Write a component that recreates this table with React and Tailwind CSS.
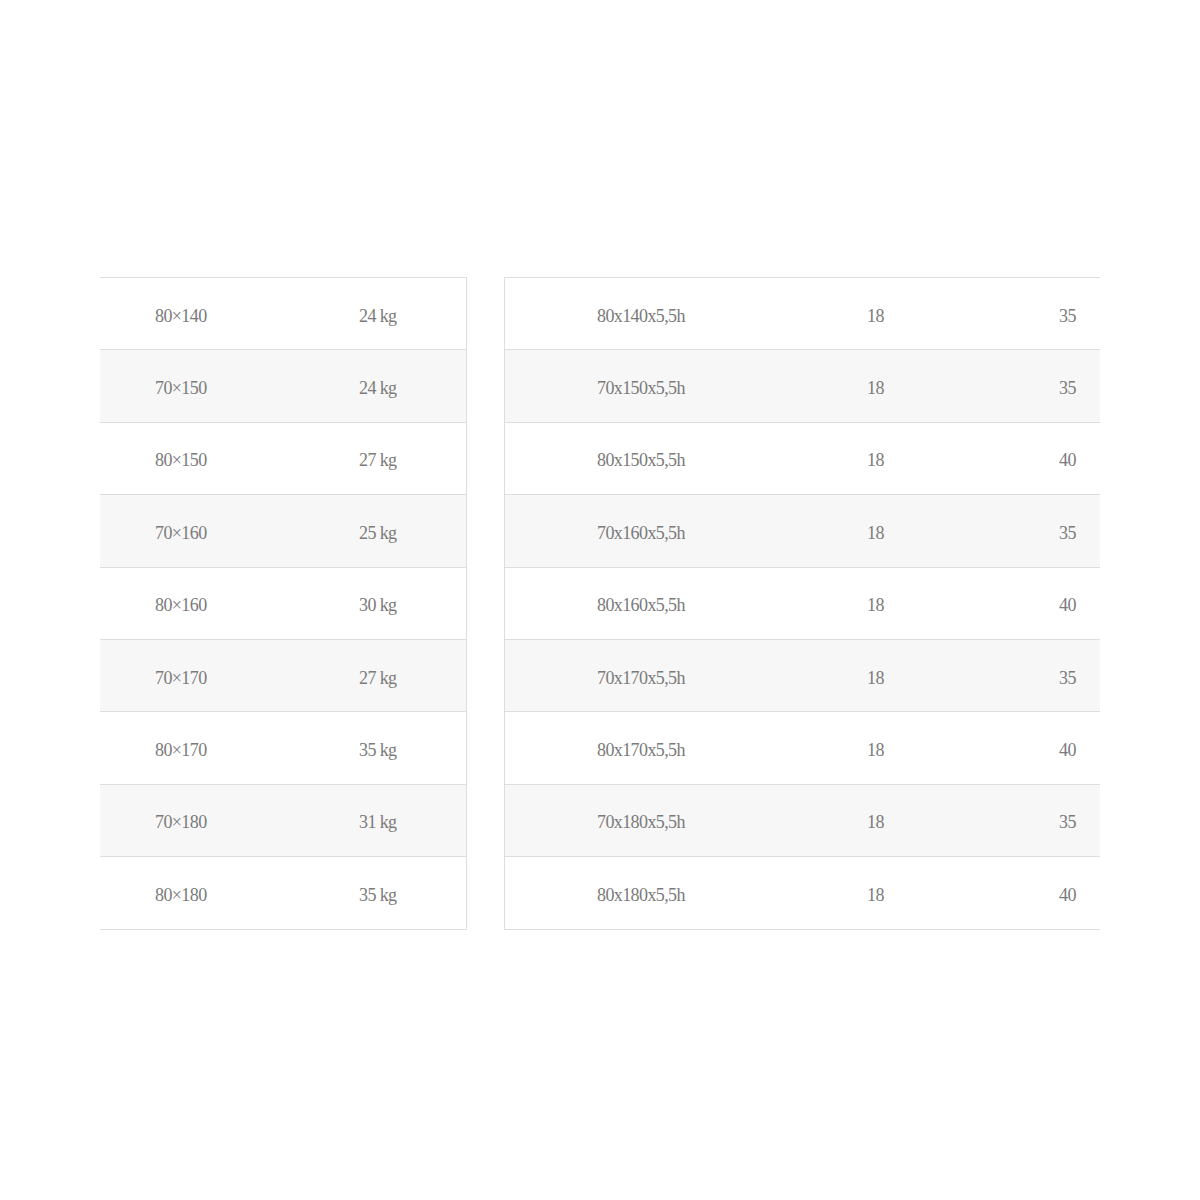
import React from 'react';

const leftRows = [
    ['80×140', '24 kg'],
    ['70×150', '24 kg'],
    ['80×150', '27 kg'],
    ['70×160', '25 kg'],
    ['80×160', '30 kg'],
    ['70×170', '27 kg'],
    ['80×170', '35 kg'],
    ['70×180', '31 kg'],
    ['80×180', '35 kg'],
];

const rightRows = [
    ['80x140x5,5h', '18', '35'],
    ['70x150x5,5h', '18', '35'],
    ['80x150x5,5h', '18', '40'],
    ['70x160x5,5h', '18', '35'],
    ['80x160x5,5h', '18', '40'],
    ['70x170x5,5h', '18', '35'],
    ['80x170x5,5h', '18', '40'],
    ['70x180x5,5h', '18', '35'],
    ['80x180x5,5h', '18', '40'],
];

const App = () => {
    return (
        <div
            className="w-[1200px] h-[1200px] bg-white text-[#7b7b7b] text-[18px] tracking-[-0.6px]"
            style={{fontFamily: '"Liberation Serif", serif'}}
        >
            <div className="flex gap-[37px] pt-[277px] pl-[100px]">
                {/* left table */}
                <div className="w-[367px] border-t border-r border-[#dedede]">
                    {leftRows.map((row, i) => (
                        <div
                            key={i}
                            className={`flex items-center h-[72.4px] pt-[5px] border-b border-[#dedede] ${i % 2 === 1 ? 'bg-[#f7f7f7]' : 'bg-white'}`}
                        >
                            <span className="w-[259px] pl-[55px]">{row[0]}</span>
                            <span>{row[1]}</span>
                        </div>
                    ))}
                </div>

                {/* right table */}
                <div className="w-[596px] border-t border-l border-[#dedede]">
                    {rightRows.map((row, i) => (
                        <div
                            key={i}
                            className={`flex items-center h-[72.4px] pt-[5px] border-b border-[#dedede] ${i % 2 === 1 ? 'bg-[#f7f7f7]' : 'bg-white'}`}
                        >
                            <span className="w-[362px] pl-[92px]">{row[0]}</span>
                            <span className="w-[192px]">{row[1]}</span>
                            <span>{row[2]}</span>
                        </div>
                    ))}
                </div>
            </div>
        </div>
    );
};

export default App;
